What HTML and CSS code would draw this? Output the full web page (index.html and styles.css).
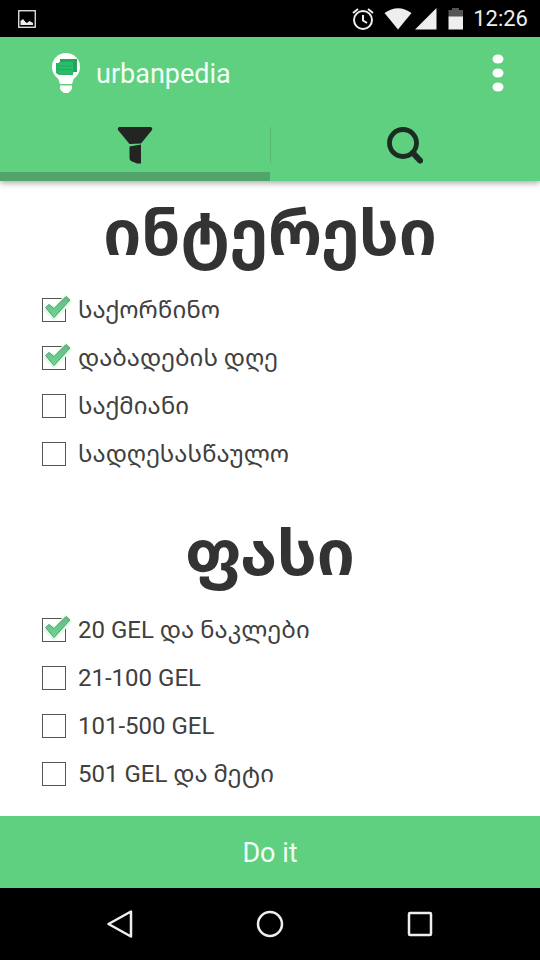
FILE: index.html
```html
<!DOCTYPE html>
<html lang="ka">
<head>
<meta charset="utf-8">
<meta name="viewport" content="width=device-width, initial-scale=1">
<title>urbanpedia</title>
<link rel="stylesheet" href="styles.css">
</head>
<body>
<svg class="defs" width="0" height="0" aria-hidden="true">
  <defs>
    <linearGradient id="tick-fill" x1="0" y1="0" x2="0" y2="1">
      <stop offset="0" stop-color="#67b985"/>
      <stop offset="1" stop-color="#6ad894"/>
    </linearGradient>
    <symbol id="tick" viewBox="0 0 30 30">
      <path d="M5 13L12 20L27 4" fill="none" stroke="#e6fbec" stroke-width="10"/>
      <path d="M3.500 13.500L7 10.500L12 14.500L24 2.500L28 6L12 23.500Z" fill="url(#tick-fill)" stroke="#4f9f6c" stroke-width="1"/>
    </symbol>
  </defs>
</svg>
<div class="status">
  <svg width="18" height="18" viewBox="0 0 18 18" aria-hidden="true">
    <rect x=".75" y=".75" width="16.500" height="16.500" fill="none" stroke="#eee" stroke-width="1.300"/>
    <path d="M2.500 15V11L5 9L7.500 12L9 13L11.500 11L15 13V15Z" fill="#eee"/>
  </svg>
  <div class="status-right">
    <svg width="22" height="22" viewBox="0 0 22 22" fill="none" stroke="#eee" stroke-width="2" aria-hidden="true">
      <circle cx="11" cy="12" r="9"/>
      <path d="M11 7V12.500L15 15M1 5L6 1M16 1L21 5"/>
    </svg>
    <svg class="wifi" width="28" height="22" viewBox="0 0 28 22" aria-hidden="true"><path d="M.5 5Q14-4.500 27.500 5L14 21.500Z" fill="#eee"/></svg>
    <svg width="22" height="22" viewBox="0 0 22 22" aria-hidden="true"><path d="M0 21.500L21.500 0V21.500Z" fill="#eee"/></svg>
    <svg class="battery" width="16" height="22" viewBox="0 0 16 22" aria-hidden="true"><path d="M.5 2H4V0H11V2H15V9H.5Z" fill="#555"/><path d="M.5 8.500H15V21.500H.5Z" fill="#eee"/></svg>
    <span class="clock">12:26</span>
  </div>
</div>
<header class="appbar">
  <div class="titlebar">
    <svg width="30" height="42" viewBox="0 0 30 42" aria-hidden="true">
      <circle cx="15" cy="15" r="14" fill="#fff"/>
      <path d="M6 23H24L21 32H9Z" fill="#fff"/>
      <path d="M9 33.500H21V37Q20 39 17 41H13Q10 39 9 37Z" fill="#fff"/>
      <path d="M5 11H22V23H8L5 21Z" fill="#27b564"/>
      <path d="M9 7H26V20H23L20 22H9Z" fill="#23a55b"/>
      <path d="M8 10H22V22H8Z" fill="#2abb6b"/>
      <path d="M8 14H21M8 17.500H21" stroke="#24aa60"/>
    </svg>
    <span class="brand">urbanpedia</span>
    <button class="more" type="button" aria-label="Menu">
      <svg width="12" height="38" viewBox="0 0 12 38" fill="#fff" aria-hidden="true"><ellipse cx="6" cy="5" rx="5.500" ry="4.500"/><ellipse cx="6" cy="19" rx="5.500" ry="4.500"/><ellipse cx="6" cy="33" rx="5.500" ry="4.500"/></svg>
    </button>
  </div>
  <nav class="tabs">
    <button class="tab active" type="button" aria-label="Filter">
      <svg width="36" height="38" viewBox="0 0 36 38" fill="#222522" aria-hidden="true">
        <path d="M2 1H34Q36 2 35 4L24 17.500L12.500 18L1 4Q0 2 2 1Z"/>
        <path d="M12.500 20.500L24 18.500V37.500H20L14 35Q12.500 34 12.500 32Z"/>
      </svg>
    </button>
    <button class="tab" type="button" aria-label="Search">
      <svg width="36" height="38" viewBox="0 0 36 38" fill="none" stroke="#1b2c20" aria-hidden="true">
        <circle cx="16" cy="17" r="13.500" stroke-width="4.800"/>
        <path d="M26 27L33 34.500" stroke-width="6" stroke-linecap="round"/>
      </svg>
    </button>
  </nav>
</header>
<main>
  <fieldset>
    <legend>ინტერესი</legend>
    <label><span class="box"><input type="checkbox" checked><svg><use href="#tick"/></svg></span>საქორწინო</label>
    <label><span class="box"><input type="checkbox" checked><svg><use href="#tick"/></svg></span>დაბადების დღე</label>
    <label><span class="box"><input type="checkbox"><svg><use href="#tick"/></svg></span>საქმიანი</label>
    <label><span class="box"><input type="checkbox"><svg><use href="#tick"/></svg></span>სადღესასწაულო</label>
  </fieldset>
  <fieldset>
    <legend>ფასი</legend>
    <label><span class="box"><input type="checkbox" checked><svg><use href="#tick"/></svg></span>20 GEL და ნაკლები</label>
    <label><span class="box"><input type="checkbox"><svg><use href="#tick"/></svg></span>21-100 GEL</label>
    <label><span class="box"><input type="checkbox"><svg><use href="#tick"/></svg></span>101-500 GEL</label>
    <label><span class="box"><input type="checkbox"><svg><use href="#tick"/></svg></span>501 GEL და მეტი</label>
  </fieldset>
</main>
<button class="submit" type="button">Do it</button>
<nav class="navbar">
  <button type="button" aria-label="Back"><svg width="30" height="30" viewBox="0 0 30 30"><path d="M3.500 15L26 2.500V27.500Z"/></svg></button>
  <button type="button" aria-label="Home"><svg width="30" height="30" viewBox="0 0 30 30"><circle cx="15" cy="15" r="12"/></svg></button>
  <button type="button" aria-label="Recents"><svg width="30" height="30" viewBox="0 0 30 30"><rect x="4" y="4" width="22" height="22" rx="1"/></svg></button>
</nav>
</body>
</html>
```
FILE: styles.css
```css
* { box-sizing: border-box; }

body {
  margin: 0;
  min-height: 100vh;
  display: flex;
  flex-direction: column;
  background: #fff;
  color: #404040;
  font-family: Roboto, "Noto Sans Georgian", "Noto Sans", sans-serif;
}

svg { display: block; }
.defs { position: absolute; }

button {
  margin: 0;
  padding: 0;
  border: 0;
  background: none;
  font: inherit;
  color: inherit;
  display: flex;
  align-items: center;
  justify-content: center;
}

.status {
  height: 37px;
  padding: 0 12px 0 18px;
  background: #000;
  color: #eee;
  display: flex;
  align-items: center;
  justify-content: space-between;
}
.status-right { display: flex; align-items: center; }
.wifi { margin: 0 3px 0 10px; }
.battery { margin: 0 9px 0 11px; }
.clock { font-size: 22px; line-height: 38px; }

.appbar {
  position: relative;
  background: #5fd080;
  box-shadow: 0 2px 6px rgba(0, 0, 0, .35);
}
.titlebar {
  height: 72px;
  padding: 0 36px 0 51px;
  display: flex;
  align-items: center;
  gap: 15px;
}
.brand { padding-top: 2px; font-size: 27px; line-height: 32px; color: #f2fff6; }
.more { margin-left: auto; }

.tabs { display: flex; height: 72px; }
.tab {
  flex: 1;
  padding-top: 8px;
  border-bottom: 9px solid transparent;
  position: relative;
}
.tab.active { border-bottom-color: #51a46a; }
.tab + .tab::before {
  content: "";
  position: absolute;
  left: 0;
  top: 18px;
  width: 1px;
  height: 36px;
  background: #55b974;
}

main {
  flex: 1;
  display: flex;
  flex-direction: column;
  gap: 23px;
  padding-bottom: 18px;
}
fieldset {
  margin: 0;
  padding: 0 42px;
  border: 0;
  min-width: 0;
}
legend {
  width: 100%;
  height: 105px;
  padding: 0;
  text-align: center;
  font-size: 63px;
  font-weight: 700;
  line-height: 105px;
  color: #333;
}
label {
  height: 48px;
  display: flex;
  align-items: center;
  gap: 12px;
  font-size: 24px;
  line-height: 50px;
}
.box { position: relative; width: 24px; height: 24px; }
.box input {
  appearance: none;
  display: block;
  width: 24px;
  height: 24px;
  margin: 0;
  border: 1px solid #555;
}
.box svg {
  display: none;
  position: absolute;
  left: 0;
  top: -4px;
  width: 30px;
  height: 30px;
}
.box input:checked + svg { display: block; }

.submit {
  height: 72px;
  padding-top: 2px;
  background: #5fd080;
  color: #f2fff6;
  font-size: 27px;
}
.navbar {
  height: 72px;
  padding: 0 45px;
  background: #000;
  display: flex;
}
.navbar button { flex: 1; }
.navbar svg { fill: none; stroke: #eee; stroke-width: 2.500px; stroke-linejoin: round; }
```
